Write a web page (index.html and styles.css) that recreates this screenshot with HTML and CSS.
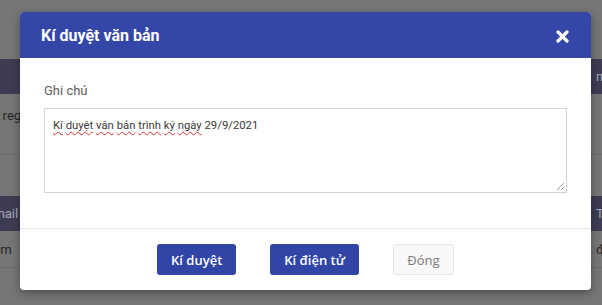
FILE: index.html
```html
<!DOCTYPE html>
<html lang="vi">
<head>
  <meta charset="UTF-8">
  <title>Kí duyệt văn bản</title>
  <link rel="stylesheet" href="styles.css">
</head>
<body>

<div id="page">
  <div class="row gap-top"></div>
  <div class="row band">
    <span class="left"></span>
    <span class="right">n</span>
  </div>
  <div class="row tall">
    <span class="left cut">ail regi</span>
    <span class="right"></span>
  </div>
  <div class="row mid"></div>
  <div class="row band">
    <span class="left cut">Email</span>
    <span class="right">T</span>
  </div>
  <div class="row short">
    <span class="left cut">com</span>
    <span class="right">đ</span>
  </div>
  <div class="row rest"></div>
</div>

<div id="modal">
  <div id="modalHeader">
    <h2>Kí duyệt văn bản</h2>
    <svg class="close" width="13" height="13" viewBox="0 0 13 13">
      <path d="M2 2 L11 11 M11 2 L2 11" stroke="#fff" stroke-width="3.2" stroke-linecap="round"/>
    </svg>
  </div>

  <div id="modalBody">
    <label>Ghi chú</label>
    <div class="noteBox">
      <span class="typo">Kí</span> <span class="typo">duyệt</span> <span class="typo">văn</span> <span class="typo">bản</span> <span class="typo">trình</span> <span class="typo">ký</span> <span class="typo">ngày</span> 29/9/2021
      <svg class="grip" width="9" height="9" viewBox="0 0 9 9">
        <path d="M8 1 L1 8 M8 5 L5 8" stroke="#999" stroke-width="1"/>
      </svg>
    </div>
  </div>

  <div id="modalFooter">
    <div class="btn primary">Kí duyệt</div>
    <div class="btn primary">Kí điện tử</div>
    <div class="btn plain">Đóng</div>
  </div>
</div>

</body>
</html>
```

FILE: styles.css
```css
body {
  margin: 0;
  width: 602px;
  height: 305px;
  overflow: hidden;
  background-color: #767676;
  font-family: Roboto, "Noto Sans", sans-serif;
  position: relative;
}

/* the page behind the overlay */
#page {
  display: flex;
  flex-direction: column;
}

.row {
  display: flex;
  justify-content: space-between;
  align-items: center;
  font-size: 13px;
  color: #262626;
}

.gap-top { height: 59px; }
.tall { height: 60px; border-bottom: 1px solid #6c6c6c; align-items: flex-start; }
.tall .left { margin-top: 14px; }
.mid { height: 41px; }
.short { height: 36px; border-bottom: 1px solid #6c6c6c; }
.rest { flex: 1; }

.band {
  height: 35px;
  background-color: #3d3c52;
  color: #a9a9b4;
}

.left.cut {
  margin-left: -14px;
}

.right {
  margin-right: -4px;
  width: 10px;
}

/* modal */
#modal {
  position: absolute;
  left: 20px;
  top: 12px;
  width: 571px;
  height: 278px;
  background-color: white;
  border-radius: 4px;
  box-shadow: 0 3px 10px rgba(0, 0, 0, 0.35);
  overflow: hidden;
  display: flex;
  flex-direction: column;
}

#modalHeader {
  height: 46px;
  background-color: #3447a8;
  display: flex;
  align-items: center;
  justify-content: space-between;
  padding: 0 22px 0 21px;
}

#modalHeader h2 {
  margin: 0;
  color: white;
  font-size: 16px;
  font-weight: 700;
  margin-top: 1px;
}

.close {
  margin-top: 2px;
}

#modalBody {
  padding: 25px 24px 35px 24px;
  border-bottom: 1px solid #e6e6e6;
  display: flex;
  flex-direction: column;
}

#modalBody label {
  font-size: 13px;
  color: #5e5e5e;
  line-height: 16px;
  margin-bottom: 9px;
}

.noteBox {
  position: relative;
  height: 67px;
  border: 1px solid #d2d2d2;
  padding: 9px 8px 7px 8px;
  font-size: 11.3px;
  color: #3a3a3a;
  line-height: 16px;
}

.typo {
  text-decoration: underline wavy #e03030;
  text-decoration-thickness: 1px;
  text-underline-offset: 2px;
}

.grip {
  position: absolute;
  right: 1px;
  bottom: 1px;
}

#modalFooter {
  display: flex;
  justify-content: center;
  gap: 34px;
  padding-top: 15px;
}

.btn {
  height: 31px;
  box-sizing: border-box;
  border-radius: 3px;
  display: flex;
  align-items: center;
  justify-content: center;
  font-family: "Open Sans", sans-serif;
  font-size: 13px;
  font-weight: 600;
}

.btn.primary {
  background-color: #3045a6;
  color: white;
  padding: 0 14px;
}

.btn.plain {
  background-color: #f8f8f8;
  border: 1px solid #e6e6e6;
  color: #7a7a7a;
  font-weight: 500;
  padding: 0 14px;
  width: 61px;
}
```
